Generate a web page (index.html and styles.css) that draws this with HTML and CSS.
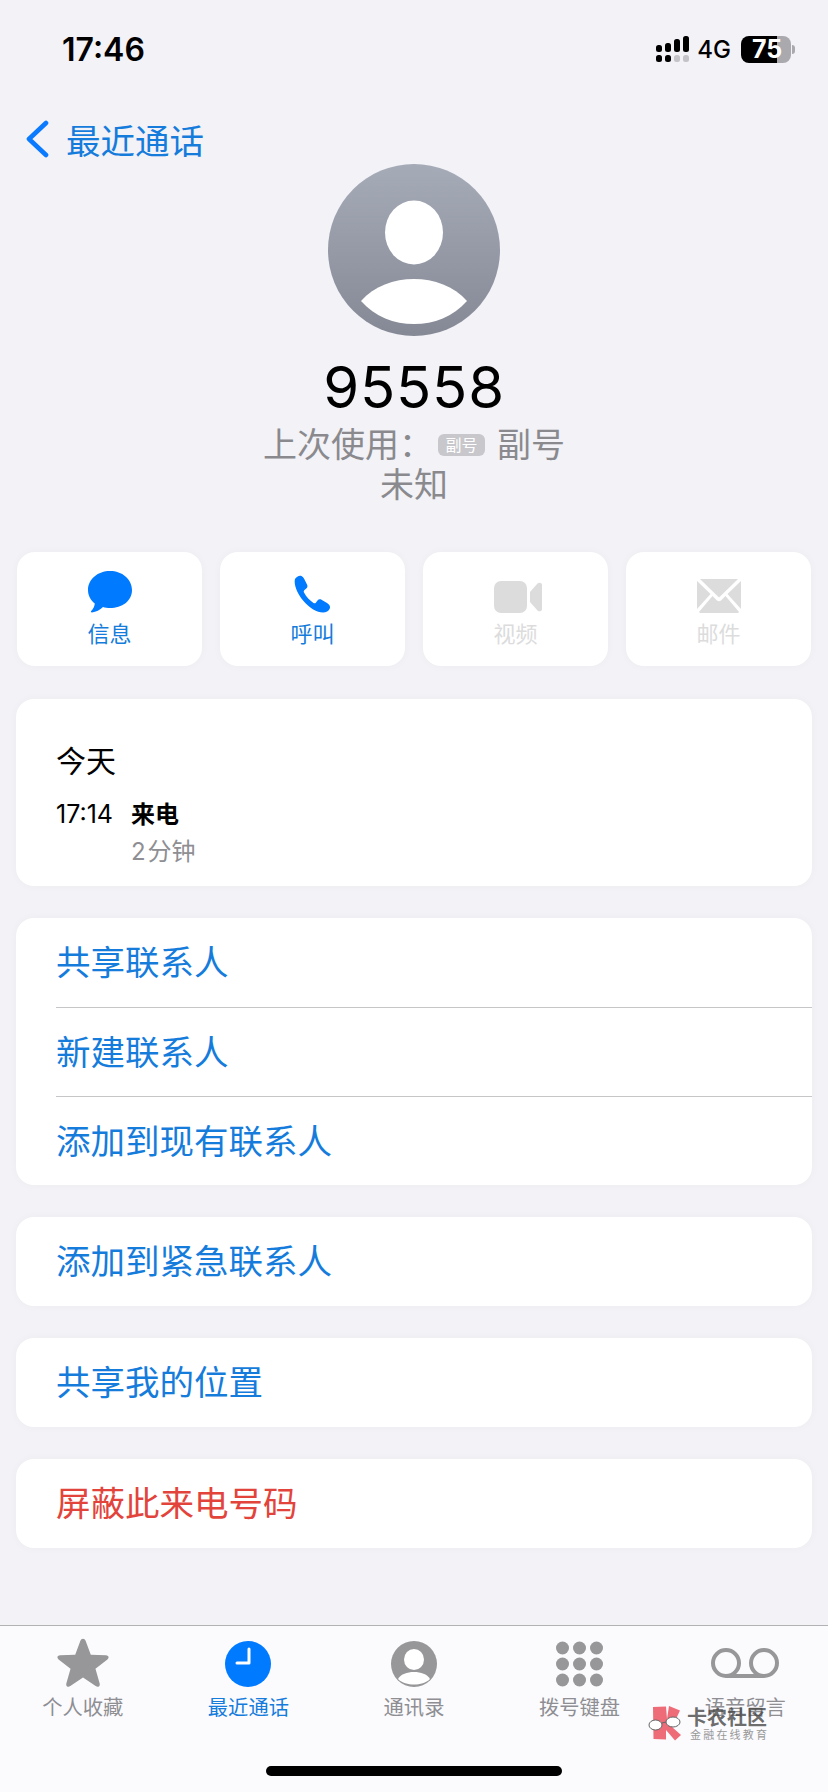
FILE: index.html
```html
<!DOCTYPE html>
<html lang="zh-CN">

<head>
     <meta charset="UTF-8">
     <meta name="viewport" content="width=device-width, initial-scale=1.0">
     <title>95558</title>
     <link rel="stylesheet" href="styles.css">
</head>

<body>
     <div class="page">
          <div class="status">
               <span class="time">17:46</span>
               <div class="status-right">
                    <svg class="signal" width="33" height="26" viewBox="0 0 33 26">
                         <rect x="0" y="9" width="6" height="7" rx="2.5" fill="#000" />
                         <rect x="9" y="7" width="6" height="9" rx="2.5" fill="#000" />
                         <rect x="18" y="3" width="6" height="13" rx="2.5" fill="#000" />
                         <rect x="27" y="0" width="6" height="16" rx="2.5" fill="#000" />
                         <rect x="0" y="19" width="6" height="7" rx="2.5" fill="#000" />
                         <rect x="9" y="19" width="6" height="7" rx="2.5" fill="#000" />
                         <rect x="18" y="19" width="6" height="7" rx="2.5" fill="#c4c4c8" />
                         <rect x="27" y="19" width="6" height="7" rx="2.5" fill="#c4c4c8" />
                    </svg>
                    <span class="net">4G</span>
                    <div class="battery"><span>75</span></div>
                    <div class="battery-nub"></div>
               </div>
          </div>

          <div class="nav">
               <svg width="26" height="38" viewBox="0 0 26 38">
                    <path d="M22 3 L5 19 L22 35" fill="none" stroke="#0a7aff" stroke-width="4.6" stroke-linecap="round" stroke-linejoin="round" />
               </svg>
               <span>最近通话</span>
          </div>

          <div class="head">
               <svg class="avatar" width="172" height="172" viewBox="0 0 172 172">
                    <defs>
                         <linearGradient id="avatarBg" x1="0" y1="0" x2="0" y2="1">
                              <stop offset="0" stop-color="#a6abb8" />
                              <stop offset="1" stop-color="#858995" />
                         </linearGradient>
                    </defs>
                    <circle cx="86" cy="86" r="86" fill="url(#avatarBg)" />
                    <ellipse cx="86" cy="68.5" rx="29" ry="32" fill="#fff" />
                    <path d="M33 137 C46 122 66 115 86 115 C106 115 126 122 139 137 C125 153 106 160 86 160 C66 160 47 153 33 137 Z" fill="#fff" />
               </svg>
               <div class="name">95558</div>
               <div class="sub">
                    <span>上次使用：</span><span class="badge">副号</span><span>副号</span>
               </div>
               <div class="sub">未知</div>
          </div>

          <div class="actions">
               <div class="action">
                    <svg width="44" height="42" viewBox="0 0 44 42">
                         <path d="M22 0 C34 0 44 8 44 19 C44 30 34 37 22 37 C19.500 37 17 36.700 15 36 C12 39 8 41 4 41.500 C3 41.500 2.600 40.700 3.200 40 C5 38 6.500 35.500 6.800 32.500 C2.600 29 0 24.500 0 19 C0 8 10 0 22 0 Z" fill="#007aff" />
                    </svg>
                    <span>信息</span>
               </div>
               <div class="action">
                    <svg width="38" height="38" viewBox="1 0 38 38">
                         <path d="M2 4 C3.500 1.500 6.500 0 8.500 1 C10 1.700 10.800 3 11.500 4.500 L14 9.500 C14.800 11 14.500 12.500 13.300 13.500 L11.500 15 C10.700 15.700 10.500 16.500 11 17.500 C13.500 22 16.500 25.300 20.500 28 C21.500 28.600 22.300 28.400 23 27.500 L24.500 25.500 C25.500 24.300 27 24 28.500 24.800 L34 28 C36.500 29.500 37.500 31.500 36.800 33.500 C35.800 36 33 37.500 30 37.500 C24 37.500 16.500 33 10.500 26 C4.500 19 0.500 10 2 4 Z" fill="#007aff" />
                    </svg>
                    <span>呼叫</span>
               </div>
               <div class="action off">
                    <svg class="video" width="48" height="32" viewBox="0 0 48 32">
                         <rect x="0" y="0" width="33" height="32" rx="7" fill="#dcdcdd" />
                         <path d="M36 11 L43.500 2.500 C45 1 48 1.500 48 4 L48 28 C48 30.500 45 31 43.500 29.500 L36 21 Z" fill="#dcdcdd" />
                    </svg>
                    <span>视频</span>
               </div>
               <div class="action off">
                    <svg width="44" height="34" viewBox="0 0 44 34">
                         <path d="M3 0 L41 0 L22 18.500 Z" fill="#dcdcdd" />
                         <path d="M0 2 L13.500 15 L0 30 Z M44 2 L30.500 15 L44 30 Z" fill="#dcdcdd" />
                         <path d="M15.500 17 L20 21.500 C21 22.500 23 22.500 24 21.500 L28.500 17 L42 33 C41.500 33.700 41 34 40 34 L4 34 C3 34 2.500 33.700 2 33 Z" fill="#dcdcdd" />
                    </svg>
                    <span>邮件</span>
               </div>
          </div>

          <div class="card calls">
               <div class="day">今天</div>
               <div class="call">
                    <span class="call-time">17:14</span>
                    <div>
                         <div class="call-type">来电</div>
                         <div class="call-len">2 分钟</div>
                    </div>
               </div>
          </div>

          <div class="card">
               <div class="row">共享联系人</div>
               <div class="row">新建联系人</div>
               <div class="row">添加到现有联系人</div>
          </div>
          <div class="card">
               <div class="row">添加到紧急联系人</div>
          </div>
          <div class="card">
               <div class="row">共享我的位置</div>
          </div>
          <div class="card">
               <div class="row danger">屏蔽此来电号码</div>
          </div>

          <div class="tabs">
               <div class="tab">
                    <svg width="54" height="50" viewBox="0 0.500 52 48">
                         <path d="M26 2 C27.200 2 28 2.800 28.500 4 L33.500 17.500 L48 18 C50.800 18.100 51.500 20.500 49.500 22 L38 31 L42 45 C42.800 47.800 40.500 49.300 38.200 47.700 L26 39.500 L13.800 47.700 C11.500 49.300 9.200 47.800 10 45 L14 31 L2.500 22 C0.500 20.500 1.200 18.100 4 18 L18.500 17.500 L23.500 4 C24 2.800 24.800 2 26 2 Z" fill="#979799" />
                    </svg>
                    <span>个人收藏</span>
               </div>
               <div class="tab active">
                    <svg width="46" height="50" viewBox="0 0 46 50">
                         <circle cx="23" cy="27" r="23" fill="#007aff" />
                         <path d="M24 12 L24 26 L12 26" fill="none" stroke="#fff" stroke-width="3" stroke-linecap="round" stroke-linejoin="round" />
                    </svg>
                    <span>最近通话</span>
               </div>
               <div class="tab">
                    <svg width="46" height="50" viewBox="0 0 46 50">
                         <circle cx="23" cy="27" r="23" fill="#979799" />
                         <ellipse cx="23" cy="22.500" rx="10" ry="10.500" fill="#fff" />
                         <path d="M7 42 C10 37 16 35 23 35 C30 35 36 37 39 42 C35 46 29 47.500 23 47.500 C17 47.500 11 46 7 42 Z" fill="#fff" />
                    </svg>
                    <span>通讯录</span>
               </div>
               <div class="tab">
                    <svg width="47" height="50" viewBox="0 0 47 50">
                         <g fill="#979799">
                              <circle cx="6.500" cy="11" r="6.500" /><circle cx="23.500" cy="11" r="6.500" /><circle cx="40.500" cy="11" r="6.500" />
                              <circle cx="6.500" cy="27" r="6.500" /><circle cx="23.500" cy="27" r="6.500" /><circle cx="40.500" cy="27" r="6.500" />
                              <circle cx="6.500" cy="43" r="6.500" /><circle cx="23.500" cy="43" r="6.500" /><circle cx="40.500" cy="43" r="6.500" />
                         </g>
                    </svg>
                    <span>拨号键盘</span>
               </div>
               <div class="tab">
                    <svg width="68" height="50" viewBox="0 0 68 50">
                         <circle cx="15" cy="26" r="13" fill="none" stroke="#979799" stroke-width="4" />
                         <circle cx="53" cy="26" r="13" fill="none" stroke="#979799" stroke-width="4" />
                         <path d="M15 39 L53 39" stroke="#979799" stroke-width="4" />
                    </svg>
                    <span>语音留言</span>
               </div>
          </div>

          <div class="home"></div>

          <div class="watermark">
               <svg width="36" height="36" viewBox="0 0 36 36">
                    <path d="M5 2 L18 1.500 L19 14 L21 1 L32 5.500 L27 16 L24 22 L33 30 L27 35.500 L18 25 L18 34.500 L5.500 34 Z" fill="#ee6b78" />
                    <path d="M14 18 L18 17" fill="none" stroke="#666" stroke-width="1" />
                    <ellipse cx="7.500" cy="20" rx="6.500" ry="5" fill="#fff" stroke="#666" stroke-width="1" />
                    <ellipse cx="25" cy="17" rx="7" ry="5" fill="#fff" stroke="#666" stroke-width="1" />
               </svg>
               <div>
                    <div class="wm-title">卡农社区</div>
                    <div class="wm-sub">金融在线教育</div>
               </div>
          </div>
     </div>
</body>

</html>
```
FILE: styles.css
```css
* {
  box-sizing: border-box;
}

body {
  margin: 0;
  background: #f2f2f7;
  font-family: Inter, "Noto Sans CJK SC", sans-serif;
}

.page {
  position: relative;
  display: flex;
  flex-direction: column;
  width: 828px;
  height: 1792px;
  overflow: hidden;
}

.status {
  display: flex;
  justify-content: space-between;
  align-items: center;
  height: 98px;
  padding: 0 33px 0 62px;
}

.time {
  font-size: 32px;
  font-weight: 600;
  color: #000;
}

.status-right {
  display: flex;
  align-items: center;
}

.net {
  margin: 0 10px 0 8px;
  font-size: 24px;
  font-weight: 500;
  color: #000;
}

.battery {
  width: 50px;
  height: 27px;
  padding-left: 11px;
  border-radius: 8px;
  background: linear-gradient(90deg, #000 36px, #a9a9ae 36px);
  color: #fff;
  font-size: 25px;
  font-weight: 700;
  line-height: 27px;
}

.battery-nub {
  width: 3px;
  height: 9px;
  margin-left: 1px;
  border-radius: 0 3px 3px 0;
  background: #a9a9ae;
}

.nav {
  display: flex;
  align-items: center;
  gap: 16px;
  height: 66px;
  padding: 16px 0 0 24px;
  color: #157cdc;
  font-size: 34.500px;
}

.head {
  display: flex;
  flex-direction: column;
  align-items: center;
}

.avatar {
  display: block;
}

.name {
  margin-top: 19px;
  font-size: 58px;
  font-weight: 400;
  letter-spacing: .800px;
  line-height: 64px;
  color: #000;
}

.sub {
  display: flex;
  align-items: center;
  height: 40px;
  color: #8a8a8e;
  font-size: 34px;
  line-height: 40px;
}

.name + .sub {
  margin-top: 6px;
}

.badge {
  width: 47px;
  height: 22px;
  margin: 0 12px 0 5px;
  border-radius: 6px;
  background: #c7c7cc;
  color: #fff;
  font-size: 16px;
  line-height: 22px;
  text-align: center;
}

.actions {
  display: grid;
  grid-template-columns: repeat(4, 1fr);
  gap: 18px;
  margin-top: 47px;
  padding: 0 17px;
}

.action {
  display: flex;
  flex-direction: column;
  align-items: center;
  justify-content: flex-end;
  height: 114px;
  padding-bottom: 17px;
  border-radius: 18px;
  background: #fff;
  box-shadow: 0 0 10px rgba(0, 0, 30, .03);
  color: #157cdc;
  font-size: 22px;
  line-height: 30px;
}

.action svg {
  margin-bottom: 6px;
}

.action .video {
  margin-left: 5px;
}

.action.off {
  color: #dcdcdd;
}

.card {
  margin: 32px 16px 0;
  border-radius: 18px;
  background: #fff;
  box-shadow: 0 0 10px rgba(0, 0, 30, .03);
}

.calls {
  height: 187px;
  margin-top: 33px;
  padding: 40px 0 0 40px;
}

.day {
  font-size: 30px;
  line-height: 44px;
  color: #000;
}

.call {
  display: flex;
  gap: 17px;
  margin-top: 13px;
  font-size: 24px;
  line-height: 37px;
  color: #000;
}

.call-time {
  width: 58px;
  font-size: 25px;
}

.call-type {
  font-weight: 700;
}

.call-len {
  color: #8e8e93;
  word-spacing: -5px;
}

.row {
  height: 89px;
  margin-left: 40px;
  color: #157cdc;
  font-size: 34.500px;
  line-height: 89px;
}

.row + .row {
  border-top: 1px solid #c6c6c8;
}

.danger {
  color: #e2443b;
}

.tabs {
  display: grid;
  grid-template-columns: repeat(5, 1fr);
  height: 167px;
  margin-top: auto;
  padding-top: 11px;
  border-top: 1px solid #b2b2b5;
  background: #fbfbfe;
}

.tab {
  display: flex;
  flex-direction: column;
  align-items: center;
  height: 90px;
  color: #8e8e93;
  font-size: 20.300px;
  line-height: 30px;
}

.tab.active {
  color: #157cdc;
}

.tab svg {
  display: block;
  margin-bottom: 6px;
}

.home {
  position: absolute;
  left: 266px;
  bottom: 16px;
  width: 296px;
  height: 10px;
  border-radius: 5px;
  background: #000;
}

.watermark {
  position: absolute;
  left: 648px;
  top: 1705px;
  display: flex;
  gap: 3px;
}

.wm-title {
  margin-top: 2px;
  font-size: 20px;
  font-weight: 700;
  line-height: 22px;
  color: rgba(70, 70, 70, .8);
}

.wm-sub {
  margin-left: 3px;
  font-size: 11px;
  letter-spacing: 2.200px;
  line-height: 13px;
  color: #999;
}
```
